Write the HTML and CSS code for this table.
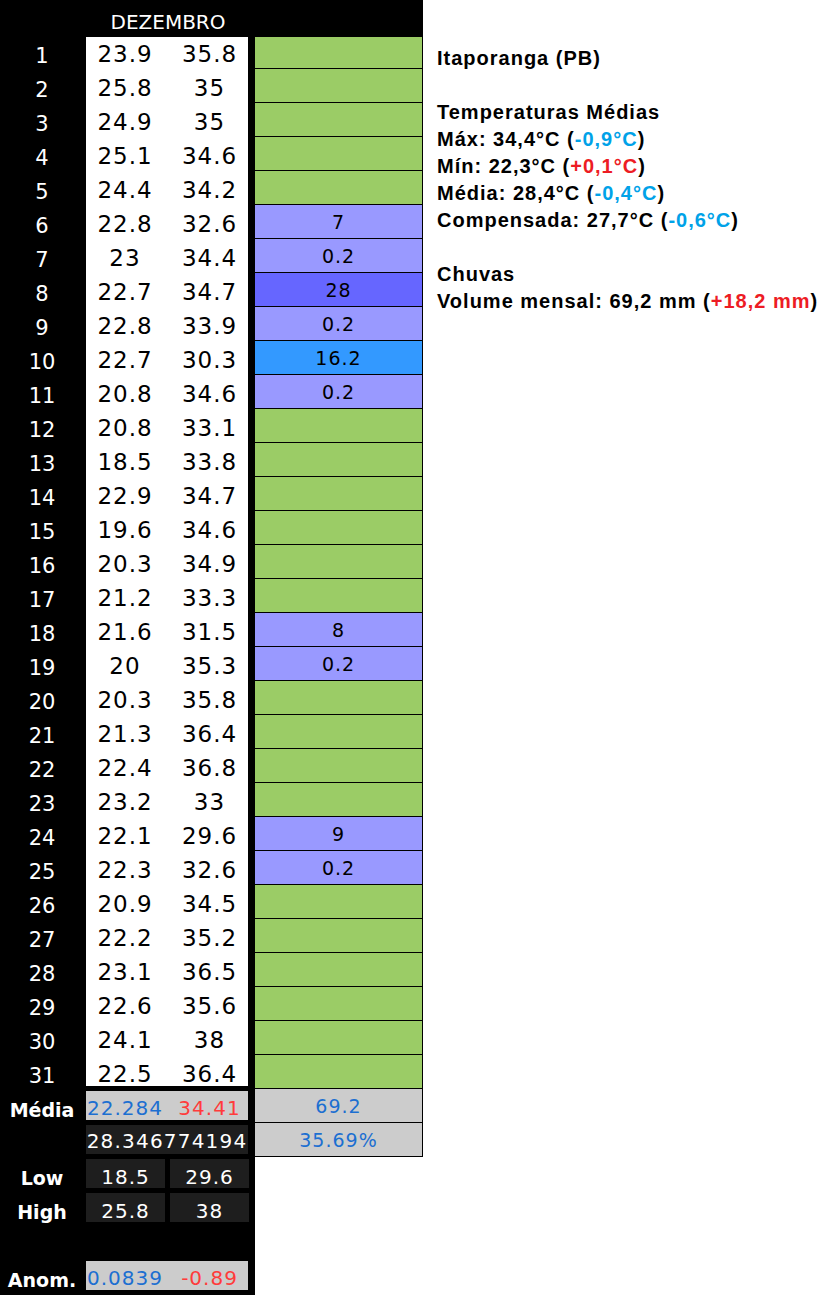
FILE: index.html
```html
<!DOCTYPE html>
<html lang="pt-BR">
<head>
<meta charset="utf-8">
<title>Dezembro - Itaporanga (PB)</title>
<link rel="stylesheet" href="styles.css">
</head>
<body>
<div class="page">
  <div class="sheet">
    <div class="hd"><span>DEZEMBRO</span></div>

    <div class="lab first">1</div><div class="v v1 first">23.9</div><div class="v v2 first">35.8</div><div class="rain g first"></div>
    <div class="lab">2</div><div class="v v1">25.8</div><div class="v v2">35</div><div class="rain g"></div>
    <div class="lab">3</div><div class="v v1">24.9</div><div class="v v2">35</div><div class="rain g"></div>
    <div class="lab">4</div><div class="v v1">25.1</div><div class="v v2">34.6</div><div class="rain g"></div>
    <div class="lab">5</div><div class="v v1">24.4</div><div class="v v2">34.2</div><div class="rain g"></div>
    <div class="lab">6</div><div class="v v1">22.8</div><div class="v v2">32.6</div><div class="rain p">7</div>
    <div class="lab">7</div><div class="v v1">23</div><div class="v v2">34.4</div><div class="rain p">0.2</div>
    <div class="lab">8</div><div class="v v1">22.7</div><div class="v v2">34.7</div><div class="rain pd">28</div>
    <div class="lab">9</div><div class="v v1">22.8</div><div class="v v2">33.9</div><div class="rain p">0.2</div>
    <div class="lab">10</div><div class="v v1">22.7</div><div class="v v2">30.3</div><div class="rain sb">16.2</div>
    <div class="lab">11</div><div class="v v1">20.8</div><div class="v v2">34.6</div><div class="rain p">0.2</div>
    <div class="lab">12</div><div class="v v1">20.8</div><div class="v v2">33.1</div><div class="rain g"></div>
    <div class="lab">13</div><div class="v v1">18.5</div><div class="v v2">33.8</div><div class="rain g"></div>
    <div class="lab">14</div><div class="v v1">22.9</div><div class="v v2">34.7</div><div class="rain g"></div>
    <div class="lab">15</div><div class="v v1">19.6</div><div class="v v2">34.6</div><div class="rain g"></div>
    <div class="lab">16</div><div class="v v1">20.3</div><div class="v v2">34.9</div><div class="rain g"></div>
    <div class="lab">17</div><div class="v v1">21.2</div><div class="v v2">33.3</div><div class="rain g"></div>
    <div class="lab">18</div><div class="v v1">21.6</div><div class="v v2">31.5</div><div class="rain p">8</div>
    <div class="lab">19</div><div class="v v1">20</div><div class="v v2">35.3</div><div class="rain p">0.2</div>
    <div class="lab">20</div><div class="v v1">20.3</div><div class="v v2">35.8</div><div class="rain g"></div>
    <div class="lab">21</div><div class="v v1">21.3</div><div class="v v2">36.4</div><div class="rain g"></div>
    <div class="lab">22</div><div class="v v1">22.4</div><div class="v v2">36.8</div><div class="rain g"></div>
    <div class="lab">23</div><div class="v v1">23.2</div><div class="v v2">33</div><div class="rain g"></div>
    <div class="lab">24</div><div class="v v1">22.1</div><div class="v v2">29.6</div><div class="rain p">9</div>
    <div class="lab">25</div><div class="v v1">22.3</div><div class="v v2">32.6</div><div class="rain p">0.2</div>
    <div class="lab">26</div><div class="v v1">20.9</div><div class="v v2">34.5</div><div class="rain g"></div>
    <div class="lab">27</div><div class="v v1">22.2</div><div class="v v2">35.2</div><div class="rain g"></div>
    <div class="lab">28</div><div class="v v1">23.1</div><div class="v v2">36.5</div><div class="rain g"></div>
    <div class="lab">29</div><div class="v v1">22.6</div><div class="v v2">35.6</div><div class="rain g"></div>
    <div class="lab">30</div><div class="v v1">24.1</div><div class="v v2">38</div><div class="rain g"></div>
    <div class="lab">31</div><div class="v v1 last">22.5</div><div class="v v2 last">36.4</div><div class="rain g"></div>

    <div class="lab lb">Média</div>
    <div class="pair gray"><span class="n1 blue">22.284</span><span class="n2 red">34.41</span></div>
    <div class="rain gray blue">69.2</div>

    <div class="lab"></div>
    <div class="span dark">28.346774194</div>
    <div class="rain gray blue pct">35.69%</div>

    <div class="lab lb">Low</div><div class="dk">18.5</div><div class="dk">29.6</div><div></div>
    <div class="lab lb">High</div><div class="dk">25.8</div><div class="dk">38</div><div></div>
    <div class="lab"></div><div></div><div></div><div></div>

    <div class="lab lb">Anom.</div>
    <div class="pair gray"><span class="n1 blue">0.0839</span><span class="n2 red">-0.89</span></div>
    <div></div>
  </div>

  <div class="info">
    <p>Itaporanga (PB)</p>
    <p class="gap">Temperaturas Médias</p>
    <p>Máx: 34,4°C (<span class="ib">-0,9°C</span>)</p>
    <p>Mín: 22,3°C (<span class="ir">+0,1°C</span>)</p>
    <p>Média: 28,4°C (<span class="ib">-0,4°C</span>)</p>
    <p>Compensada: 27,7°C (<span class="ib">-0,6°C</span>)</p>
    <p class="gap">Chuvas</p>
    <p>Volume mensal: 69,2 mm (<span class="ir">+18,2 mm</span>)</p>
  </div>
</div>
</body>
</html>
```

FILE: styles.css
```css
html, body {
  margin: 0;
  padding: 0;
  background: #ffffff;
}

.page {
  display: flex;
  align-items: flex-start;
}

.sheet {
  width: 423px;
  display: grid;
  grid-template-columns: 84px 84px 84px 171px;
  grid-template-rows: 35px repeat(37, 34px);
  padding-bottom: 2px;
  background: linear-gradient(90deg, #000000 255px, transparent 255px);
  font-family: "DejaVu Sans", Verdana, sans-serif;
  box-sizing: border-box;
}

.hd {
  grid-column: 1 / -1;
  background: #000000;
  color: #ffffff;
  display: flex;
  align-items: center;
  justify-content: center;
  padding: 8px 171px 0 84px;
  font-size: 20px;
}

.lab {
  color: #ffffff;
  font-size: 21px;
  display: flex;
  align-items: center;
  justify-content: center;
  padding-top: 8px;
}

.lab.lb {
  font-size: 19px;
  font-weight: bold;
  padding-top: 7px;
}

.v {
  background: #ffffff;
  color: #000000;
  font-size: 23px;
  letter-spacing: 1px;
  display: flex;
  align-items: center;
  justify-content: center;
  padding-top: 4px;
}

.v1 {
  margin-left: 2px;
  padding-right: 4px;
}

.v2 {
  margin-right: 4px;
  padding-left: 3px;
}

.v.first {
  box-shadow: inset 0 2px 0 #000000;
}

.v.last {
  box-shadow: inset 0 -3px 0 #000000;
}

.rain {
  margin-left: 3px;
  border-right: 1px solid #000000;
  border-bottom: 1px solid #000000;
  display: flex;
  align-items: center;
  justify-content: center;
  font-size: 19px;
  letter-spacing: 1px;
  color: #000000;
  padding-top: 1px;
}

.rain.first {
  box-shadow: inset 0 2px 0 #000000;
}

.g { background: #9bcc66; }
.p { background: #9999ff; }
.pd { background: #6666ff; }
.sb { background: #3399ff; }
.gray { background: #cccccc; }

.rain.blue { color: #1c6fd1; font-size: 19px; }

.pair {
  grid-column: span 2;
  margin: 2px 4px 3px 2px;
  display: grid;
  grid-template-columns: 82px 80px;
  font-size: 20px;
  letter-spacing: 1px;
}

.pair span {
  display: flex;
  align-items: center;
  justify-content: center;
  padding-top: 5px;
}

.pair .n1 { padding-right: 4px; }
.pair .n2 { padding-left: 3px; }

.blue { color: #1c6fd1; }
.red { color: #ff3b3b; }

.span {
  grid-column: span 2;
  margin: 2px 4px 3px 2px;
  display: flex;
  align-items: center;
  justify-content: center;
  font-size: 20px;
  letter-spacing: 1.2px;
  color: #ffffff;
  padding-top: 3px;
}

.dark { background: #1e1e1e; }

.dk {
  background: #1e1e1e;
  color: #ffffff;
  margin: 2px 3px 3px 2px;
  display: flex;
  align-items: center;
  justify-content: center;
  font-size: 20px;
  letter-spacing: 1px;
  padding-top: 6px;
}

.info {
  margin-left: 14px;
  padding-top: 45px;
  font-family: "Liberation Sans", Arial, sans-serif;
  font-weight: bold;
  font-size: 20px;
  letter-spacing: 1px;
  line-height: 27px;
  color: #000000;
}

.info p {
  margin: 0;
  white-space: nowrap;
}

.info p.gap {
  margin-top: 27px;
}

.ib { color: #00a2e8; }
.ir { color: #ed1c24; }
```
